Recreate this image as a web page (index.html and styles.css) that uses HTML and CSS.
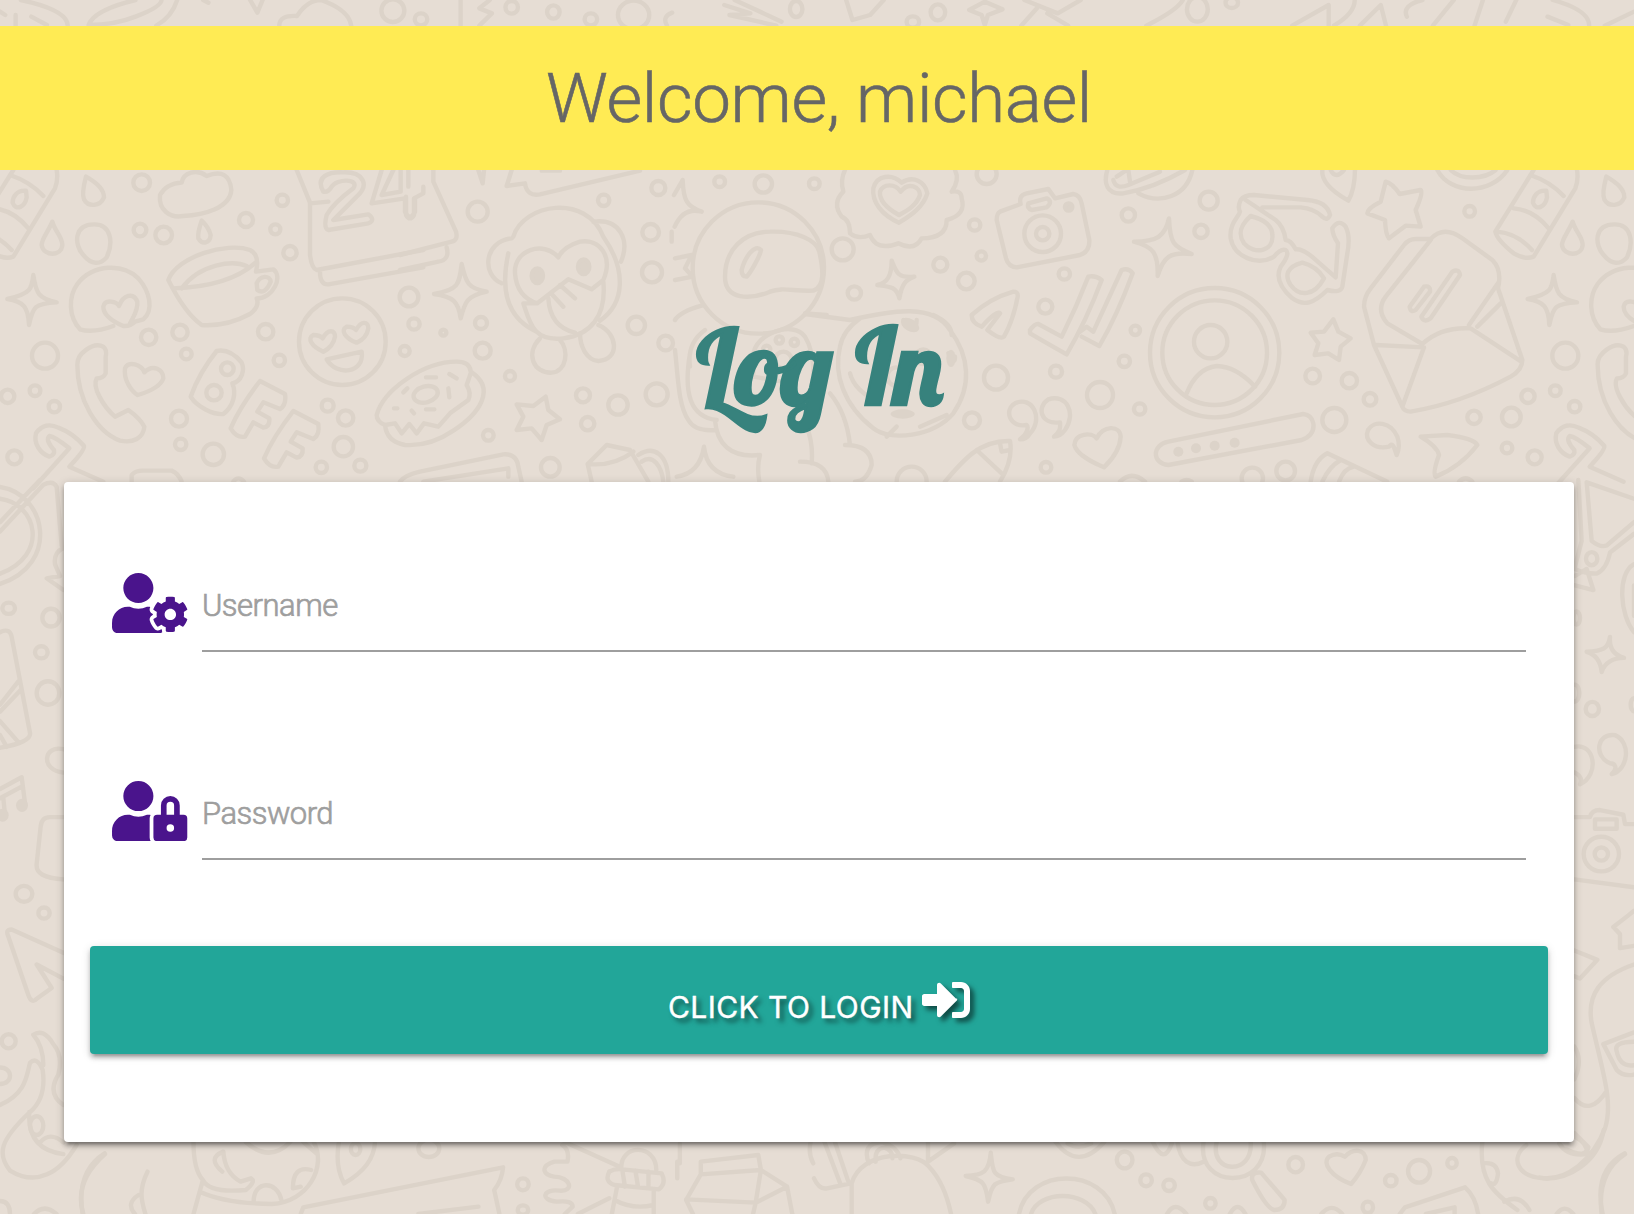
FILE: index.html
```html
<!DOCTYPE html>
<html lang="en">
<head>
<meta charset="utf-8">
<title>Log In</title>
<link rel="stylesheet" href="styles.css">
</head>
<body>
<svg class="doodles" viewBox="0 0 1634 1214" aria-hidden="true">
  <!-- upper band, left -->
  <g transform="translate(0 160) scale(.33333)">
    <g id="edge">
      <path d="M40 30L-75 215Q-70 240 -20 280Q15 300 40 290L165 85Q175 60 170 30M30 45Q90 65 130 108M-20 145Q40 150 85 205M-70 215Q-10 220 35 270M78 92C50 90 38 110 38 128C48 155 75 140 80 112Z"/>
      <path d="M258 50C250 80 246 105 252 118C265 142 300 140 312 112C312 85 285 65 258 50ZM157 185C145 215 125 235 125 255C130 290 185 290 187 255C187 230 165 215 157 185Z"/>
      <path d="M283 193C220 193 222 255 250 285C275 315 300 315 320 292C340 250 335 193 283 193Z"/>
      <path d="M100 345C95 385 95 400 22 417C70 425 85 440 87 495C98 440 105 430 170 427C115 415 108 400 100 345Z"/>
      <path d="M240 508C205 470 205 410 232 372C280 310 370 310 415 355C450 395 462 450 430 478L405 485Q390 500 370 498C340 485 310 465 310 440C315 415 350 425 357 438C370 405 400 395 412 425C415 450 400 470 390 490M240 508Q280 520 340 498"/>
      <path d="M232 615C230 580 280 545 310 560Q322 570 317 590V640Q310 655 290 655C275 680 310 740 345 770L385 750Q420 775 433 800C430 835 400 850 360 842C290 815 232 720 232 615Z"/>
      <path d="M100 985L208 865Q165 830 148 828Q135 840 162 870Q165 885 148 890C120 880 100 850 108 820C125 795 150 790 175 803Q220 820 252 858Q255 870 208 920L310 965"/>
      <circle cx="135" cy="587" r="39"/><circle cx="23" cy="709" r="20"/><circle cx="105" cy="692" r="16"/><circle cx="163" cy="740" r="17"/><circle cx="43" cy="892" r="21"/>
    </g>
    <use href="#edge" x="4561"/>
    <circle cx="425" cy="68" r="25"/><circle cx="420" cy="210" r="19"/><circle cx="491" cy="225" r="25"/><circle cx="738" cy="180" r="21"/><circle cx="826" cy="208" r="15"/><circle cx="847" cy="121" r="17"/><circle cx="870" cy="278" r="20"/><circle cx="446" cy="532" r="23"/><circle cx="540" cy="517" r="23"/><circle cx="559" cy="582" r="16"/><circle cx="797" cy="515" r="23"/><circle cx="838" cy="601" r="17"/><circle cx="537" cy="776" r="24"/><circle cx="542" cy="853" r="17"/><circle cx="640" cy="883" r="32"/><circle cx="983" cy="737" r="18"/><circle cx="1037" cy="774" r="23"/><circle cx="1030" cy="860" r="29"/><circle cx="964" cy="922" r="17"/><circle cx="1081" cy="917" r="18"/>
    <path d="M545 68Q500 70 480 105C475 150 510 175 550 168C610 165 690 145 694 90C690 45 665 30 620 48C590 25 550 38 545 68ZM605 182C597 205 592 220 595 235C607 255 630 250 632 225Q625 200 605 182Z"/>
    <path d="M505 360C530 290 680 245 750 270Q780 285 768 335L820 328C850 350 820 415 770 415Q780 440 750 462Q680 500 605 495Q555 460 505 360ZM520 385Q690 380 770 305M545 385C600 310 700 300 740 318M770 370C780 345 810 345 812 365C800 395 785 400 772 390Z"/>
    <path d="M890 30L930 128V285Q935 325 950 330L1270 270M930 130L985 125M960 335Q960 375 985 373L1270 322M970 95C945 50 985 35 1030 37C1090 35 1110 75 1070 110L1000 180L1105 163Q1128 180 1105 190L985 210Q970 205 980 165Q1000 130 1060 85C1080 55 1010 55 995 80Q985 98 970 95ZM1145 30L1115 130L1215 115V155Q1230 185 1245 155V115M1180 30L1145 105L1202 95V30"/>
    <circle cx="1027" cy="545" r="130"/>
    <path d="M970 575C935 560 920 535 940 525Q960 525 968 535C985 505 1005 510 1005 530Q1000 560 970 575ZM1070 548C1035 535 1020 510 1040 500Q1060 500 1068 510C1085 480 1105 485 1105 505Q1100 535 1070 548ZM980 598L1085 575C1095 640 1010 650 980 598Z"/>
    <path d="M375 625C385 600 425 615 433 637C460 610 490 630 490 655Q480 685 413 705C395 695 370 660 375 625Z"/>
    <path d="M650 573C620 610 590 660 572 710C590 740 640 765 670 762C700 740 710 700 697 670C725 665 735 630 725 608Q690 565 650 573Z"/><circle cx="682" cy="626" r="19"/><circle cx="642" cy="698" r="23"/>
    <path id="eff" d="M780 663L855 702Q860 735 840 747L790 727L772 755L808 775Q810 800 790 803L760 787L735 830Q710 835 692 805Q720 740 780 663Z"/><use href="#eff" x="100" y="90"/>
    <path d="M395 965V945Q405 932 430 932H515Q535 940 545 965M700 965Q715 945 732 965"/>
  </g>
  <!-- upper band, centre left -->
  <g transform="translate(400 160) scale(.33333)">
    <circle cx="233" cy="155" r="30"/><circle cx="27" cy="411" r="28"/><circle cx="42" cy="492" r="17"/><circle cx="14" cy="573" r="15"/><circle cx="130" cy="518" r="9"/><circle cx="243" cy="489" r="18"/><circle cx="248" cy="572" r="24"/><circle cx="330" cy="648" r="15"/><circle cx="265" cy="826" r="16"/><circle cx="451" cy="922" r="28"/><circle cx="549" cy="706" r="21"/><circle cx="563" cy="791" r="20"/><circle cx="654" cy="735" r="29"/><circle cx="770" cy="703" r="33"/><circle cx="709" cy="496" r="26"/><circle cx="797" cy="549" r="22"/><circle cx="756" cy="337" r="30"/><circle cx="752" cy="217" r="25"/><circle cx="775" cy="84" r="21"/><circle cx="611" cy="121" r="17"/><circle cx="959" cy="65" r="16"/><circle cx="1090" cy="72" r="26"/>
    <path d="M100 30V65L168 215Q175 240 155 245L0 285M140 262Q150 300 115 305L0 330M25 30V80M70 80V100L42 115V165Q30 185 18 165V110M235 30L248 70L252 30M335 30L320 78L375 70Q380 110 420 103L720 32M425 32H480"/>
    <path d="M185 312C178 370 178 390 102 402C160 410 175 425 182 475C195 425 200 408 260 395C205 385 198 370 185 312Z"/>
    <path d="M340 230C370 130 560 100 610 230C680 330 675 430 600 482M325 280C305 370 310 470 410 515M335 235C250 245 245 345 305 370M580 185C660 175 690 240 663 305M475 292C430 240 340 270 345 340Q350 410 412 430L505 358L575 388L610 360C640 290 600 235 540 245Q490 260 475 292M412 430L370 430C390 490 400 545 490 535C570 525 620 470 610 365M445 415Q450 500 525 518M455 402L490 440M480 375L525 415"/>
    <ellipse class="solid" cx="412" cy="347" rx="17" ry="22"/><ellipse class="solid" cx="551" cy="320" rx="17" ry="22"/>
    <path d="M420 535C375 580 400 640 455 638C500 635 508 570 480 540M540 520C540 560 560 600 595 603C660 600 655 520 595 495"/>
    <path d="M-70 765C-50 690 70 605 170 605Q210 605 212 635C290 685 240 760 160 812Q90 860 15 855Q-40 845 -45 795Q-70 785 -70 765M-45 795L-15 790L5 820L28 792L50 820L72 790L115 800L150 760L205 720Q215 700 200 675L212 640"/><ellipse cx="77" cy="703" rx="37" ry="24" transform="rotate(-15 77 703)"/>
    <path d="M78 652H108M148 642L170 655M145 685L148 712M78 748H103M35 752L42 760M10 697L22 685M-18 745H-8"/>
    <path d="M437 710L445 750L480 778L440 795L425 840L395 805L350 810L370 770L350 733L400 738Z"/>
    <path d="M0 965Q15 945 60 935L310 883Q350 880 355 920L365 965M70 965L325 925V950M575 965L563 912Q600 875 620 855L690 870L745 965M563 912Q640 920 700 875M715 885C760 855 805 880 805 965M725 905C760 880 785 920 790 965"/>
    <circle cx="1075" cy="324" r="197"/>
    <path d="M975 350C975 270 1030 215 1110 215C1190 212 1250 240 1258 275C1270 330 1275 380 1240 392C1180 395 1150 380 1110 395C1050 420 975 420 975 350ZM1025 330C1035 290 1065 250 1083 270C1080 290 1050 340 1040 350Q1025 350 1025 330Z"/>
    <path d="M822 105L848 60C850 120 860 140 905 155Q850 140 824 200M815 215V245M825 295L875 285L855 325L878 350L825 360M825 480Q840 455 905 437M825 570C835 660 835 735 865 780Q885 815 945 810M870 580C850 700 870 770 950 780M915 510Q860 550 870 620M945 780C950 850 990 895 1080 885Q1070 920 1078 965M1220 800Q1240 850 1235 910M1200 905Q1280 905 1285 965M830 950Q900 940 912 860Q920 940 1000 950M1215 460L1280 465M1060 585C1065 520 1180 480 1215 530Q1240 570 1240 640M1060 585L1060 650L1180 670"/><circle cx="1138" cy="540" r="11"/><circle cx="1183" cy="547" r="11"/><circle cx="1100" cy="568" r="11"/><circle cx="1150" cy="600" r="25"/>
  </g>
  <!-- upper band, centre right -->
  <g transform="translate(800 160) scale(.33333)">
    <circle cx="43" cy="71" r="16"/><circle cx="128" cy="268" r="33"/><circle cx="163" cy="399" r="20"/><circle cx="421" cy="314" r="21"/><circle cx="499" cy="363" r="25"/><circle cx="544" cy="288" r="14"/><circle cx="524" cy="195" r="17"/><circle cx="560" cy="42" r="30"/><circle cx="793" cy="342" r="17"/><circle cx="736" cy="440" r="21"/><circle cx="985" cy="165" r="20"/><circle cx="1226" cy="122" r="27"/><circle cx="1203" cy="214" r="20"/><circle cx="1006" cy="511" r="14"/><circle cx="973" cy="604" r="17"/><circle cx="768" cy="635" r="18"/><circle cx="588" cy="653" r="36"/><circle cx="900" cy="705" r="39"/><circle cx="1019" cy="747" r="17"/><circle cx="516" cy="781" r="24"/><circle cx="738" cy="922" r="16"/><circle cx="335" cy="965" r="45"/>
    <path d="M135 30Q120 60 130 95Q95 130 125 170Q150 180 150 220Q175 240 210 225Q230 275 295 250Q345 275 365 235Q440 235 440 180Q500 165 485 115Q485 90 455 95Q480 60 465 30"/>
    <path d="M297 188C245 165 215 125 220 85C230 45 275 40 305 68C340 45 375 65 382 100C370 140 335 165 297 188ZM297 165C260 145 238 120 240 95C250 70 285 70 302 95C325 65 360 80 360 105C350 135 325 150 297 165Z"/>
    <path d="M275 302C275 350 260 370 232 375C270 380 290 380 298 415C305 375 315 360 343 350C295 355 290 340 275 302Z"/>
    <path d="M600 155L662 132Q655 105 680 100L745 87L765 115L820 102Q840 105 845 130L868 240Q870 275 840 285L650 322Q625 320 618 295L590 180Q590 160 600 155ZM685 130L740 115Q760 125 740 142L695 150Q680 145 685 130Z"/><circle cx="728" cy="221" r="55"/><circle cx="728" cy="221" r="20"/><circle class="solid" cx="806" cy="141" r="11"/>
    <path d="M922 30C910 70 920 105 970 100Q1060 85 1155 30M940 60C945 80 960 85 985 75L1080 35M985 30L990 65M950 50L980 30M1015 100C1080 135 1160 110 1177 30"/>
    <path d="M1107 175C1095 230 1070 245 1002 245C1060 260 1075 280 1073 348C1090 290 1110 275 1175 282C1120 260 1110 250 1107 175Z"/>
    <path d="M640 395Q655 395 653 410Q640 480 612 530Q600 540 562 510L600 460Q590 450 545 500Q515 490 515 465Q570 415 640 395ZM690 510Q705 490 715 492L785 530Q830 440 865 350Q885 345 905 360Q860 480 800 583Q750 555 690 520ZM840 515L860 500L880 515L965 330Q985 322 998 340Q950 470 898 558L845 530"/>
    <circle cx="1244" cy="578" r="194"/><circle cx="1244" cy="578" r="157"/><circle cx="1232" cy="545" r="50"/><path d="M1160 700Q1190 625 1250 618Q1310 620 1365 680"/>
    <path d="M660 838C685 820 685 800 680 795C630 805 610 750 645 730C700 705 730 780 690 820Q680 838 660 838ZM762 830C785 810 780 800 780 787C720 795 710 740 745 718C800 700 830 760 795 810Q780 830 762 830Z"/>
    <path d="M912 922C870 905 830 880 823 855C825 820 875 815 890 835C910 795 960 795 962 830C960 870 935 900 912 922Z"/>
    <path d="M1510 762L1105 845C1055 855 1055 910 1105 915L1505 840Q1545 825 1540 790Q1535 765 1510 762"/><circle class="dot" cx="1135" cy="875" r="15"/><circle class="dot" cx="1188" cy="865" r="15"/><circle class="dot" cx="1244" cy="857" r="15"/><circle class="dot" cx="1304" cy="848" r="15"/>
    <path d="M435 965C490 900 540 840 630 843Q640 900 600 965M530 870L605 940M600 850L605 875L630 870M960 965Q995 930 1035 965M1145 965Q1160 955 1175 965"/>
    <path d="M15 462L150 480C280 450 400 430 450 510C510 590 515 680 460 760C400 830 270 845 220 805C130 735 100 640 120 560Q130 510 180 475M310 480Q350 520 350 480M400 465Q455 490 455 525M445 580Q465 620 465 590M150 640C160 680 190 700 220 720M260 830L290 800M360 800L440 765M90 700Q140 760 150 855M135 855Q215 855 215 915Q200 965 165 965"/><ellipse class="dot" cx="308" cy="762" rx="36" ry="14"/><ellipse class="dot" cx="330" cy="495" rx="30" ry="18" transform="rotate(30 330 495)"/><ellipse class="dot" cx="453" cy="595" rx="14" ry="26"/><circle cx="290" cy="650" r="28"/><circle cx="370" cy="590" r="22"/>
  </g>
  <!-- upper band, right -->
  <g transform="translate(1214 160) scale(.33333)">
    <path d="M80 120Q90 105 120 105L280 120Q340 125 348 165Q340 185 325 170Q300 145 260 142H145M95 120L185 180Q210 200 215 240Q230 240 245 268Q265 265 300 295L365 352L372 250Q355 225 355 205Q375 175 395 200Q410 230 400 280L385 380Q380 400 340 390C300 430 270 440 235 415C195 380 185 350 200 320Q230 280 215 270Q200 265 180 290C130 320 60 290 50 235C45 190 75 170 78 155Q70 140 80 120M110 168C80 195 70 220 90 250C120 285 180 275 175 225Q175 185 110 168ZM265 308C220 320 210 345 230 375C255 410 300 410 330 355Q310 320 265 308"/>
    <path d="M325 30Q320 75 403 122Q422 90 423 30M350 30Q365 60 390 30M515 65Q535 70 557 102L620 90Q630 95 605 150L620 200L575 197L525 235Q515 225 513 180L460 160Q460 145 500 125ZM670 30C710 105 830 105 880 30M710 30C740 60 810 60 845 30"/>
    <path d="M565 740L480 555L450 440Q450 410 470 385L570 255Q585 235 610 237H650Q690 195 745 235L835 300Q865 330 852 385L925 600Q925 630 890 650Q740 730 590 755Q570 755 565 740ZM650 240L515 410Q485 450 520 490L625 552Q680 500 770 505L922 605M485 555L630 562L565 740M855 365L765 495M860 430L790 500"/>
    <path d="M715 335Q735 325 738 345L650 475Q630 490 622 470ZM630 380Q650 375 648 395L605 450Q590 460 587 440Z"/>
    <path d="M358 478L373 515L410 535L380 560L375 600L343 580L302 585L313 550L290 518L330 515Z"/>
    <circle cx="767" cy="154" r="16"/><circle cx="296" cy="648" r="22"/><circle cx="406" cy="662" r="23"/><circle cx="468" cy="718" r="19"/><circle cx="361" cy="780" r="36"/><circle cx="780" cy="772" r="20"/><circle cx="892" cy="771" r="28"/><circle cx="879" cy="864" r="16"/><circle cx="215" cy="933" r="28"/><circle cx="115" cy="955" r="32"/>
    <path d="M548 885C540 860 535 845 525 860C480 870 450 840 462 810C480 780 530 785 550 830Q560 860 548 885ZM620 830L700 825Q780 835 790 855Q740 920 665 950Q655 940 675 885Q670 860 620 830ZM290 965Q300 900 340 880L520 965M325 965Q345 920 380 900M375 965Q390 925 420 920M735 965Q755 945 775 965"/>
  </g>
  <!-- strip above the banner -->
  <g transform="scale(1.0421 .33333)">
    <path d="M0 35L5 45M20 0Q65 30 65 77M15 45V77M30 50L45 75M130 0Q90 30 85 75Q110 75 130 50Q155 20 155 0M170 0Q165 50 150 77M240 0L247 38L252 0M195 0L200 8M268 77Q268 45 285 48Q295 0 308 0Q335 30 337 77M442 0V77M470 0L460 25L472 40L460 77M640 77Q635 50 645 38M695 15L720 40L700 45L745 77M705 0L750 65M812 0L818 60L835 45L848 0M945 5L930 30L942 45L945 75L948 45L962 28ZM983 0L1015 40L1037 0M995 25L980 77M1005 40L1025 77M1135 0Q1130 30 1100 77M1240 77L1275 15V77M1280 77Q1300 40 1300 0M1305 77L1325 15L1330 77M1350 50Q1345 15 1365 0M1395 0L1375 77M1423 0L1415 77M1455 0L1445 65M1490 0Q1525 30 1525 77M1485 50L1505 75M1568 35L1540 77"/>
    <ellipse cx="377" cy="32" rx="11" ry="34"/><ellipse cx="404" cy="58" rx="6" ry="18"/><ellipse cx="491" cy="22" rx="6" ry="19"/><ellipse cx="531" cy="36" rx="6" ry="20"/><ellipse cx="567" cy="58" rx="6" ry="18"/><ellipse cx="608" cy="45" rx="15" ry="43"/><ellipse cx="764" cy="27" rx="6" ry="24"/><ellipse cx="876" cy="66" rx="6" ry="17"/><ellipse cx="900" cy="37" rx="7" ry="24"/><ellipse cx="1149" cy="28" rx="10" ry="37"/><ellipse cx="1182" cy="8" rx="6" ry="16"/>
  </g>
  <!-- left margin -->
  <g transform="translate(0 480) scale(.33333 .46816)">
    <path d="M0 110L130 10Q160 0 170 15L185 140M0 90L120 0M0 15C140 30 180 180 0 222M0 40C110 50 150 160 0 200M190 145Q160 155 165 180L180 205L140 210L190 235M0 325Q30 315 35 335L90 540Q95 560 0 572M0 480L55 430M0 495L60 450M0 515L55 560M0 545L20 570M0 660L65 635L75 690M0 680L65 655M10 680L15 715M190 575C130 565 120 620 190 625M190 720H150Q125 720 122 740L110 820Q105 850 190 853M190 1010L35 960Q15 960 25 975L85 1100Q95 1120 110 1108L155 1085L110 1035L190 1065M0 1335C80 1310 80 1270 90 1245Q110 1230 128 1260Q140 1320 90 1350C0 1410 -10 1440 30 1475C110 1510 180 1480 230 1420M100 1185Q130 1170 160 1205Q190 1230 175 1270Q140 1310 190 1335M100 1185Q130 1210 130 1250M88 1350Q80 1430 190 1440M120 1415Q150 1390 190 1415M315 1440Q220 1500 250 1568M0 1255C40 1255 40 1290 0 1290M0 1540Q30 1540 30 1568"/>
    <ellipse cx="26" cy="274" rx="19" ry="12"/><ellipse cx="153" cy="294" rx="26" ry="19"/><ellipse cx="124" cy="368" rx="19" ry="13"/><ellipse cx="144" cy="455" rx="34" ry="25"/><ellipse cx="72" cy="884" rx="25" ry="17"/><ellipse cx="132" cy="925" rx="17" ry="12"/><ellipse cx="26" cy="1199" rx="21" ry="15"/><ellipse cx="110" cy="1379" rx="20" ry="20"/><ellipse class="dot" cx="66" cy="695" rx="18" ry="14"/><ellipse class="dot" cx="8" cy="716" rx="18" ry="14"/>
  </g>
  <!-- right margin -->
  <g transform="translate(1540 480) scale(.33333 .46816)">
    <path d="M282 40L140 5L155 130Q180 145 200 140L282 90M282 115L210 155Q200 190 170 200Q130 200 105 190M115 0L125 130L105 185M105 205L140 190L160 235L105 225M282 180C230 200 240 290 282 325M282 225V290M210 335C205 360 190 365 140 367Q180 375 185 410Q200 380 252 380Q205 370 210 335ZM103 570C165 560 180 630 120 650Q130 635 105 625M215 628C235 615 225 605 210 605C160 590 170 540 225 545C275 560 265 620 215 628ZM103 720H150Q155 705 180 705L250 715L255 735H282M165 725H230V745H165ZM103 853L282 870M282 920L265 930L220 955L240 970V1000L282 995M103 1005L172 1025L120 1065L103 1060M282 1035C180 1060 140 1100 155 1160C190 1270 220 1330 195 1385C160 1450 80 1500 0 1490M103 1320Q150 1360 200 1305M103 1210Q130 1240 103 1280M282 1180L190 1205L230 1260Q250 1275 282 1270M282 1200Q220 1200 230 1220Q240 1255 282 1250M255 1440Q170 1480 185 1568M103 1395L145 1425Q140 1450 80 1430"/>
    <ellipse cx="155" cy="168" rx="17" ry="14"/><ellipse cx="110" cy="295" rx="10" ry="14"/><ellipse cx="104" cy="455" rx="14" ry="18"/><ellipse cx="157" cy="489" rx="20" ry="15"/><ellipse cx="184" cy="799" rx="53" ry="37"/><ellipse cx="184" cy="799" rx="20" ry="14"/><ellipse cx="282" cy="480" rx="10" ry="14"/>
  </g>
  <!-- lower band, left -->
  <g transform="translate(0 1130) scale(.52296 .33333)">
    <path d="M200 70Q145 125 158 252M282 125C265 180 270 210 278 252M265 195Q240 220 258 252M370 36Q370 120 388 150Q400 190 470 180Q490 155 480 145L460 155Q430 130 427 65M427 65Q395 85 425 125M470 36Q515 100 555 36M600 36C625 110 590 215 520 222Q430 220 382 185M388 150L370 252M580 36L605 70M595 120Q560 105 560 175L575 170M485 215C485 150 530 150 538 210M648 36Q640 110 658 160Q715 110 717 36M575 252L580 232L962 112Q960 150 945 180L955 252M800 252L915 230M1075 45Q1090 60 1085 95H1060C1030 110 1040 135 1060 140C1090 140 1100 185 1070 182C1040 175 1030 210 1065 215Q1095 210 1095 230L1080 252M1080 36L1185 110M1188 118C1185 40 1255 40 1255 120M1165 125Q1175 115 1190 118L1265 130Q1275 160 1260 178L1175 165Q1155 155 1165 125M1190 120L1195 170M1215 122L1220 170M1240 125V172M1180 170L1170 252M1250 178V252M1175 210Q1210 240 1250 225M1165 205L1105 252M1300 40V100M1295 95V145M1340 95L1450 75L1455 120L1340 133ZM1340 133L1312 210L1325 252M1312 208L1445 218L1455 120L1505 170L1515 252M1505 170L1445 218L1440 252M1550 36Q1545 70 1555 100M65 252Q85 220 108 252"/>
    <ellipse cx="680" cy="57" rx="9" ry="18"/><ellipse cx="820" cy="55" rx="20" ry="26"/><ellipse cx="1000" cy="163" rx="11" ry="18"/><ellipse cx="1000" cy="240" rx="10" ry="14"/>
  </g>
  <!-- lower band, right -->
  <g transform="translate(814 1130) scale(.52296 .33333)">
    <path d="M0 145Q10 180 25 175L70 160M20 36L50 160M40 36L65 152M72 252V160C90 60 195 60 220 110Q250 160 262 252M105 100Q90 40 130 36Q160 50 165 85M118 95Q115 55 135 53Q150 60 150 85M218 36V95L268 40M338 68C335 125 325 135 290 138C325 150 328 160 333 215C340 160 345 155 380 148C340 140 342 125 338 68ZM392 252C410 110 555 110 575 252M415 252C430 180 520 180 538 252M462 36Q505 125 555 36M485 40Q505 60 530 40M648 36Q670 110 685 36M695 36C700 95 720 115 745 95M745 36C730 180 870 180 860 36M770 36C755 130 840 140 835 36M838 150Q835 125 855 128L900 210Q900 240 880 240Q865 235 838 150M1027 162C990 140 970 100 985 80Q1000 65 1015 80C1030 55 1055 55 1055 90Q1045 130 1027 162ZM1278 36C1270 150 1300 190 1345 240M1280 100Q1305 95 1308 130Q1305 170 1295 160M1510 0C1500 100 1440 150 1395 145C1345 140 1330 85 1362 45M1425 40Q1440 80 1478 72Q1480 40 1455 20M1120 252L1130 232L1245 172Q1265 200 1270 252M1170 252L1225 232V252M1550 70Q1490 120 1508 252M1320 215Q1350 190 1368 240M1420 252Q1435 220 1452 252M675 252Q690 210 712 252M795 252Q810 210 825 252M970 252Q990 215 1010 252"/>
    <ellipse cx="594" cy="90" rx="15" ry="25"/><ellipse cx="635" cy="151" rx="11" ry="18"/><ellipse cx="679" cy="166" rx="11" ry="17"/><ellipse cx="758" cy="220" rx="10" ry="16"/><ellipse cx="921" cy="104" rx="14" ry="23"/><ellipse cx="1103" cy="152" rx="11" ry="17"/><ellipse cx="1157" cy="124" rx="21" ry="34"/><ellipse cx="1220" cy="99" rx="9" ry="15"/><ellipse cx="1059" cy="232" rx="10" ry="17"/>
  </g>
</svg>

<main class="page">
  <header class="banner"><h1 class="welcome">Welcome, michael</h1></header>
  <h2 class="title">Log In</h2>
  <form class="card">
    <label class="field">
      <svg class="field-icon" viewBox="0 0 640 512"><path d="M610.5 373.3c2.6-14.1 2.6-28.5 0-42.6l25.8-14.9c3-1.7 4.3-5.2 3.3-8.5-6.7-21.6-18.2-41.2-33.2-57.4-2.3-2.5-6-3.1-9-1.4l-25.8 14.9c-10.9-9.3-23.4-16.5-36.9-21.3v-29.8c0-3.4-2.4-6.4-5.7-7.1-22.3-5-45-4.8-66.2 0-3.3.7-5.7 3.7-5.7 7.1v29.8c-13.5 4.8-26 12-36.9 21.3l-25.8-14.9c-2.9-1.7-6.7-1.1-9 1.4-15 16.2-26.5 35.8-33.2 57.4-1 3.3.4 6.8 3.3 8.5l25.8 14.9c-2.6 14.1-2.6 28.5 0 42.6l-25.8 14.9c-3 1.7-4.3 5.2-3.3 8.5 6.7 21.6 18.2 41.1 33.2 57.4 2.3 2.5 6 3.1 9 1.4l25.8-14.9c10.9 9.3 23.4 16.5 36.9 21.3v29.8c0 3.4 2.4 6.4 5.7 7.1 22.3 5 45 4.8 66.2 0 3.3-.7 5.7-3.7 5.7-7.1v-29.8c13.5-4.8 26-12 36.9-21.3l25.8 14.9c2.9 1.7 6.7 1.1 9-1.4 15-16.2 26.5-35.8 33.2-57.4 1-3.3-.4-6.8-3.3-8.5l-25.8-14.9zM496 400.5c-26.8 0-48.5-21.8-48.5-48.5s21.8-48.5 48.5-48.5 48.5 21.8 48.5 48.5-21.7 48.5-48.5 48.5zM224 256c70.7 0 128-57.3 128-128S294.7 0 224 0 96 57.3 96 128s57.3 128 128 128zm201.2 226.5c-2.3-1.2-4.6-2.6-6.8-3.9l-7.9 4.6c-6 3.4-12.8 5.3-19.6 5.3-10.9 0-21.4-4.6-28.9-12.6-18.3-19.8-32.3-43.9-40.2-69.6-5.5-17.7 1.9-36.4 17.9-45.7l7.9-4.6c-.1-2.6-.1-5.2 0-7.8l-7.9-4.6c-16-9.2-23.4-28-17.9-45.7.9-2.9 2.2-5.8 3.2-8.7-3.8-.3-7.5-1.2-11.4-1.2h-16.7c-22.2 10.2-46.9 16-72.9 16s-50.6-5.8-72.9-16h-16.7C60.2 288 0 348.2 0 422.4V464c0 26.5 21.5 48 48 48h352c10.1 0 19.5-3.2 27.2-8.5-1.2-3.8-2-7.7-2-11.8v-9.2z"/></svg>
      <span class="field-line">Username</span>
    </label>
    <label class="field">
      <svg class="field-icon" viewBox="0 0 640 512"><path d="M224 256A128 128 0 1 0 96 128a128 128 0 0 0 128 128zm96 64a63.08 63.08 0 0 1 8.1-30.5c-4.8-.5-9.5-1.5-14.5-1.5h-16.7a174.08 174.08 0 0 1-145.8 0h-16.7A134.43 134.43 0 0 0 0 422.4V464a48 48 0 0 0 48 48h280.9a63.54 63.54 0 0 1-8.9-32zm288-32h-32v-80a80 80 0 0 0-160 0v80h-32a32 32 0 0 0-32 32v160a32 32 0 0 0 32 32h224a32 32 0 0 0 32-32V320a32 32 0 0 0-32-32zM496 432a32 32 0 1 1 32-32 32 32 0 0 1-32 32zm32-144h-64v-80a32 32 0 0 1 64 0z"/></svg>
      <span class="field-line">Password</span>
    </label>
    <button class="login" type="button">
      <span class="login-text">CLICK TO LOGIN</span>
      <svg class="login-icon" viewBox="0 0 512 512"><path d="M416 448h-84c-6.6 0-12-5.4-12-12v-40c0-6.6 5.4-12 12-12h84c17.7 0 32-14.3 32-32V160c0-17.7-14.3-32-32-32h-84c-6.6 0-12-5.4-12-12V76c0-6.6 5.4-12 12-12h84c53 0 96 43 96 96v192c0 53-43 96-96 96zm-47-201L201 79c-15-15-41-4.5-41 17v96H24c-13.3 0-24 10.7-24 24v80c0 13.3 10.7 24 24 24h136v96c0 21.5 26 32 41 17l168-168c9.3-9.4 9.3-24.6 0-34z"/></svg>
    </button>
  </form>
</main>
</body>
</html>
```
FILE: styles.css
```css
* { box-sizing: border-box; }
html, body { margin: 0; height: 1214px; overflow: hidden; }
body { background: #e6ddd4; font-family: Roboto, sans-serif; position: relative; }

.doodles {
  position: absolute;
  inset: 0;
  width: 1634px;
  height: 1214px;
  fill: none;
  stroke: #dcd3c9;
  stroke-width: 4.4;
  stroke-linecap: round;
  stroke-linejoin: round;
}
.doodles path, .doodles circle, .doodles ellipse { vector-effect: non-scaling-stroke; }
.doodles .dot { fill: #dcd3c9; stroke: none; }
.doodles .solid { fill: #dcd3c9; }

.page { position: relative; display: flex; flex-direction: column; padding: 26px 60px 0 64px; }

.banner {
  height: 144px;
  margin: 0 -60px 0 -64px;
  padding: 2px 0 0 4px;
  background: #ffeb54;
  display: flex;
  align-items: center;
  justify-content: center;
}
.welcome {
  margin: 0;
  font-size: 69px;
  font-weight: 300;
  line-height: 76px;
  color: #666;
  letter-spacing: -0.35px;
  -webkit-text-stroke: .6px #666;
}

.title {
  height: 312px;
  margin: 0;
  padding: 126px 0 0 1px;
  text-align: center;
  font-family: Lobster, "Liberation Serif", serif;
  font-size: 105px;
  font-weight: 400;
  line-height: 140px;
  color: #37827d;
  -webkit-text-stroke: 2.4px #37827d;
}

.card {
  height: 660px;
  padding: 78px 26px 0;
  background: #fff;
  border-radius: 4px;
  box-shadow: 0 4px 4px rgba(0,0,0,.24), 0 6px 2px -4px rgba(0,0,0,.2), 0 2px 10px rgba(0,0,0,.2);
}
.field { display: flex; gap: 14.3px; height: 208px; padding: 0 22px 0 22.4px; }
.field-icon { width: 75.3px; height: 60.2px; margin-top: 13.3px; fill: #4a148c; }
.field-line {
  flex: 1;
  height: 92px;
  border-bottom: 2px solid #9e9e9e;
  font-size: 31px;
  font-weight: 300;
  line-height: 92px;
  letter-spacing: -0.5px;
  color: #9e9e9e;
  -webkit-text-stroke: .7px #9e9e9e;
}
.login {
  display: flex;
  justify-content: center;
  align-items: flex-start;
  width: 100%;
  height: 108px;
  margin-top: -30px;
  padding: 0;
  border: 0;
  border-radius: 4px;
  background: #22a699;
  color: #fff;
  gap: 8.5px;
  box-shadow: 0 4px 4px rgba(0,0,0,.2), 0 6px 2px -4px rgba(0,0,0,.16), 0 2px 10px rgba(0,0,0,.14);
}
.login-text {
  margin-top: 42px;
  font: 400 30px/38px Inter, sans-serif;
  letter-spacing: .45px;
  -webkit-text-stroke: .4px #fff;
  text-shadow: 4px 4px 5px rgba(0,0,0,.55);
}
.login-icon { width: 48px; height: 48px; margin-top: 30px; fill: #fff; filter: drop-shadow(4px 4px 2.5px rgba(0,0,0,.55)); }
```
